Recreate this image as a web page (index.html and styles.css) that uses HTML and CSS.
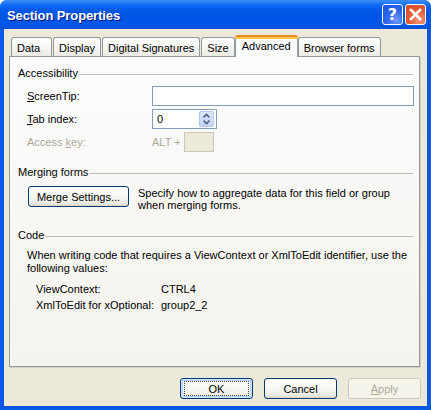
FILE: index.html
```html
<!DOCTYPE html>
<html>
<head>
<meta charset="utf-8">
<title>Section Properties</title>
<link rel="stylesheet" href="styles.css">
</head>
<body>
<div class="window">
  <div class="titlebar">
    <span class="title">Section Properties</span>
    <div class="tb-buttons">
      <span class="tb-btn help">?</span>
      <span class="tb-btn close">
        <svg width="13" height="13" viewBox="0 0 13 13"><path d="M2 2 L11 11 M11 2 L2 11" stroke="#fff" stroke-width="2.6" stroke-linecap="square"/></svg>
      </span>
    </div>
  </div>
  <div class="client">
    <div class="tabs">
      <div class="tab tab-data">Data</div>
      <div class="tab">Display</div>
      <div class="tab">Digital Signatures</div>
      <div class="tab">Size</div>
      <div class="tab selected">Advanced</div>
      <div class="tab">Browser forms</div>
    </div>
    <div class="panel">
      <div class="group-head"><span>Accessibility</span><i class="rule"></i></div>
      <div class="rows">
        <div class="row">
          <label class="lbl"><u>S</u>creenTip:</label>
          <div class="field wide"></div>
        </div>
        <div class="row">
          <label class="lbl"><u>T</u>ab index:</label>
          <div class="field spin">
            <span class="val">0</span>
            <span class="spinner">
              <svg width="9" height="14" viewBox="0 0 9 14"><path d="M1.5 5.5 L4.5 2.5 L7.5 5.5 M1.5 8.5 L4.5 11.5 L7.5 8.5" fill="none" stroke="#4D6185" stroke-width="1.6"/></svg>
            </span>
          </div>
        </div>
        <div class="row disabled">
          <label class="lbl">Access <u>k</u>ey:</label>
          <span class="alt">ALT +</span>
          <div class="field keybox"></div>
        </div>
      </div>

      <div class="group-head merging"><span>Merging forms</span><i class="rule"></i></div>
      <div class="merge-row">
        <button class="btn merge-btn">Mer<u>g</u>e Settings...</button>
        <p class="merge-desc">Specify how to aggregate data for this field or group<br>when merging forms.</p>
      </div>

      <div class="group-head code"><span>Code</span><i class="rule"></i></div>
      <p class="code-desc">When writing code that requires a ViewContext or XmlToEdit identifier, use the following values:</p>
      <div class="code-table">
        <span>ViewContext:</span><span>CTRL4</span>
        <span>XmlToEdit for xOptional:</span><span>group2_2</span>
      </div>
    </div>
    <div class="buttons">
      <button class="btn default"><span class="focus">OK</span></button>
      <button class="btn">Cancel</button>
      <button class="btn disabled-btn"><u>A</u>pply</button>
    </div>
  </div>
</div>
</body>
</html>
```

FILE: styles.css
```css
* { box-sizing: border-box; }
html, body { margin: 0; padding: 0; background: #ffffff; }
body {
  font-family: "Liberation Sans", Arial, sans-serif;
  font-size: 11px;
  color: #000;
}
.window {
  width: 431px;
  height: 410px;
  display: flex;
  flex-direction: column;
  border-radius: 7px 7px 0 0;
  overflow: hidden;
  background: #0A58E6;
}
.titlebar {
  height: 29px;
  flex: none;
  display: flex;
  align-items: center;
  justify-content: space-between;
  padding: 2px 5px 0 7px;
  background: linear-gradient(to bottom, #3C8EF3 0px, #2C82FB 2px, #0F6AF5 5px, #0559E8 10px, #0055E5 18px, #0256E9 24px, #034FD8 29px);
}
.title {
  font-family: "Liberation Sans", Arial, sans-serif;
  font-weight: bold;
  font-size: 13px;
  color: #fff;
  text-shadow: 1px 1px 0 #0A1883;
  letter-spacing: -0.1px;
}
.tb-buttons { display: flex; gap: 2px; margin-top: -2px; }
.tb-btn {
  width: 21px;
  height: 21px;
  border: 1px solid #fff;
  border-radius: 3px;
  display: flex;
  align-items: center;
  justify-content: center;
  color: #fff;
}
.help {
  background: radial-gradient(circle at 70% 80%, #6F9BF7 0%, #2F67EE 45%, #1D4FD9 100%);
  font-family: "DejaVu Sans", sans-serif;
  font-weight: bold;
  font-size: 16px;
  line-height: 1;
}
.close {
  background: radial-gradient(circle at 70% 80%, #F39A7A 0%, #E2603A 45%, #D2481E 100%);
}
.client {
  flex: 1;
  margin: 0 4px 4px 4px;
  background: #ECE9D8;
  padding: 6px 7px 0 5px;
  display: flex;
  flex-direction: column;
}
.tabs {
  display: flex;
  align-items: flex-end;
  height: 21px;
  padding-left: 2px;
  gap: 1px;
  position: relative;
  z-index: 2;
}
.tab {
  height: 19px;
  padding: 3px 5px 0 5px;
  line-height: 15px;
  border: 1px solid #919B9C;
  border-bottom: none;
  border-radius: 3px 3px 0 0;
  background: linear-gradient(to bottom, #FFFFFF 0%, #F7F7F4 40%, #ECEBE5 100%);
  white-space: nowrap;
}
.tab-data { min-width: 41px; }
.tab.selected {
  height: 22px;
  margin: 0 -1px -1px -1px;
  padding: 0 6px 0 6px;
  line-height: 17px;
  border-top: 3px solid #FFC83C;
  box-shadow: inset 0 1px 0 #F5B53A;
  border-radius: 3px 3px 0 0;
  background: #FCFCFE;
  border-top-color: #E68B2C;
  position: relative;
}
.tab.selected::before {
  content: "";
  position: absolute;
  left: -1px;
  right: -1px;
  top: -1px;
  height: 2px;
  background: #FFC83C;
}
.panel {
  height: 311px;
  border: 1px solid #919B9C;
  background: linear-gradient(to bottom, #FCFCFE 0%, #F7F6F2 60%, #F4F3EE 100%);
  padding: 10px 6px 0 8px;
  box-shadow: 1px 1px 0 #D0CEBF;
}
.group-head {
  display: flex;
  align-items: center;
  line-height: 13px;
  height: 13px;
}
.group-head .rule {
  flex: 1;
  height: 1px;
  background: #C0BEB2;
  margin-left: 1px;
  margin-top: 1px;
}
.rows {
  margin-top: 6px;
  display: flex;
  flex-direction: column;
  gap: 3px;
}
.row {
  display: flex;
  align-items: center;
  height: 20px;
  padding-left: 9px;
}
.lbl { width: 125px; flex: none; }
.field {
  height: 20px;
  border: 1px solid #7F9DB9;
  background: #fff;
}
.wide { flex: 1; margin-right: -1px; }
.spin {
  width: 65px;
  display: flex;
  align-items: center;
  justify-content: space-between;
  padding: 0 2px 0 4px;
}
.val { line-height: 16px; }
.spinner {
  width: 15px;
  height: 16px;
  border: 1px solid #B5C8F0;
  border-radius: 2px;
  background: linear-gradient(to bottom, #DDE6FB 0%, #C3D3F7 100%);
  display: flex;
  align-items: center;
  justify-content: center;
}
.disabled { color: #ACA899; }
.alt { width: 32px; flex: none; }
.keybox {
  width: 30px;
  background: #ECE9D8;
  border-color: #C9C7BA;
}
.merging { margin-top: 14px; }
.merge-row {
  display: flex;
  align-items: flex-start;
  margin-top: 7px;
  padding-left: 10px;
}
.btn {
  font-family: "Liberation Sans", Arial, sans-serif;
  font-size: 11px;
  color: #000;
  height: 21px;
  padding: 0;
  border: 1px solid #003C74;
  border-radius: 3px;
  background: linear-gradient(to bottom, #FFFFFF 0%, #F7F7F4 45%, #EDECE5 85%, #D8D4C6 100%);
  display: flex;
  align-items: center;
  justify-content: center;
}
.merge-btn { width: 101px; flex: none; }
.merge-desc {
  margin: 1px 0 0 9px;
  line-height: 12px;
}
.code { margin-top: 18px; }
.code-desc {
  margin: 7px 0 0 9px;
  line-height: 13px;
  padding-right: 4px;
}
.code-table {
  margin-top: 6px;
  padding-left: 18px;
  display: grid;
  grid-template-columns: 125px auto;
  line-height: 16px;
}
.buttons {
  display: flex;
  justify-content: flex-end;
  gap: 11px;
  margin-top: 11px;
  padding-right: 0;
  margin-right: -1px;
}
.buttons .btn { width: 73px; }
.default {
  box-shadow: inset 0 0 0 1px #CEE7FF, inset 0 0 0 2px #B7D0F4;
}
.focus {
  display: flex;
  align-items: center;
  justify-content: center;
  width: 65px;
  height: 15px;
  border: 1px dotted #444;
}
.disabled-btn {
  border-color: #C9C7BA;
  color: #ACA899;
  background: #F5F4EA;
}
```
